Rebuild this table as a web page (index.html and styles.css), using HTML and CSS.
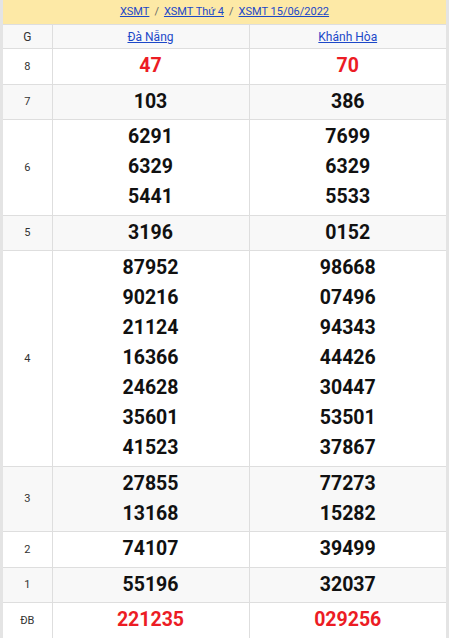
FILE: index.html
```html
<!DOCTYPE html>
<html lang="vi">
<head>
<meta charset="utf-8">
<link rel="stylesheet" href="styles.css">
</head>
<body>
<div class="wrap">
  <div class="crumbs">
    <a href="#">XSMT</a><span class="sep">/</span><a href="#">XSMT Thứ 4</a><span class="sep">/</span><a href="#">XSMT 15/06/2022</a>
  </div>
  <table class="kq">
    <colgroup><col class="c-g"><col><col></colgroup>
    <tr class="head">
      <th>G</th>
      <th><a href="#">Đà Nẵng</a></th>
      <th><a href="#">Khánh Hòa</a></th>
    </tr>
    <tr>
      <td class="lbl">8</td>
      <td class="num red"><div>47</div></td>
      <td class="num red"><div>70</div></td>
    </tr>
    <tr class="alt">
      <td class="lbl">7</td>
      <td class="num"><div>103</div></td>
      <td class="num"><div>386</div></td>
    </tr>
    <tr>
      <td class="lbl">6</td>
      <td class="num"><div>6291</div><div>6329</div><div>5441</div></td>
      <td class="num"><div>7699</div><div>6329</div><div>5533</div></td>
    </tr>
    <tr class="alt">
      <td class="lbl">5</td>
      <td class="num"><div>3196</div></td>
      <td class="num"><div>0152</div></td>
    </tr>
    <tr>
      <td class="lbl">4</td>
      <td class="num"><div>87952</div><div>90216</div><div>21124</div><div>16366</div><div>24628</div><div>35601</div><div>41523</div></td>
      <td class="num"><div>98668</div><div>07496</div><div>94343</div><div>44426</div><div>30447</div><div>53501</div><div>37867</div></td>
    </tr>
    <tr class="alt">
      <td class="lbl">3</td>
      <td class="num"><div>27855</div><div>13168</div></td>
      <td class="num"><div>77273</div><div>15282</div></td>
    </tr>
    <tr>
      <td class="lbl">2</td>
      <td class="num"><div>74107</div></td>
      <td class="num"><div>39499</div></td>
    </tr>
    <tr class="alt">
      <td class="lbl">1</td>
      <td class="num"><div>55196</div></td>
      <td class="num"><div>32037</div></td>
    </tr>
    <tr>
      <td class="lbl">ĐB</td>
      <td class="num red"><div>221235</div></td>
      <td class="num red"><div>029256</div></td>
    </tr>
  </table>
</div>
</body>
</html>
```

FILE: styles.css
```css
html, body {
  margin: 0;
  padding: 0;
  background: #fff;
}
body {
  font-family: Roboto, "Liberation Sans", Arial, sans-serif;
  color: #222;
}
.wrap {
  width: 449px;
  box-sizing: border-box;
  border-left: 3px solid #e4e4e4;
  border-right: 3px solid #e4e4e4;
}
.crumbs {
  height: 25px;
  line-height: 24px;
  background: #fde9a6;
  text-align: center;
  font-size: 11px;
  border-bottom: 1px solid #dedede;
  box-sizing: border-box;
}
.crumbs a {
  color: #1c48c8;
  text-decoration: underline;
}
.crumbs .sep {
  color: #666;
  margin: 0 5px;
}
.kq {
  width: 100%;
  border-collapse: collapse;
  table-layout: fixed;
}
.kq col.c-g {
  width: 49px;
}
.kq th, .kq td {
  border: 1px solid #dedede;
  text-align: center;
  vertical-align: middle;
}
.kq tr:first-child th {
  border-top: none;
}
.kq th:first-child, .kq td:first-child {
  border-left: none;
}
.kq th:last-child, .kq td:last-child {
  border-right: none;
}
.kq .head th {
  background: #f8f8f8;
  height: 23px;
  padding: 0;
  font-weight: normal;
  font-size: 12px;
}
.kq .head th:first-child {
  font-size: 12px;
  color: #333;
}
.kq .head a {
  color: #1c48c8;
  text-decoration: underline;
}
.kq .alt td {
  background: #f8f8f8;
}
.kq .lbl {
  font-size: 11px;
  color: #333;
  padding: 0;
}
.kq .num {
  padding: 2.25px 0;
  font-weight: bold;
  font-size: 19.5px;
  line-height: 30px;
  color: #111;
}
.kq .num.red {
  color: #ec1c24;
}
```
